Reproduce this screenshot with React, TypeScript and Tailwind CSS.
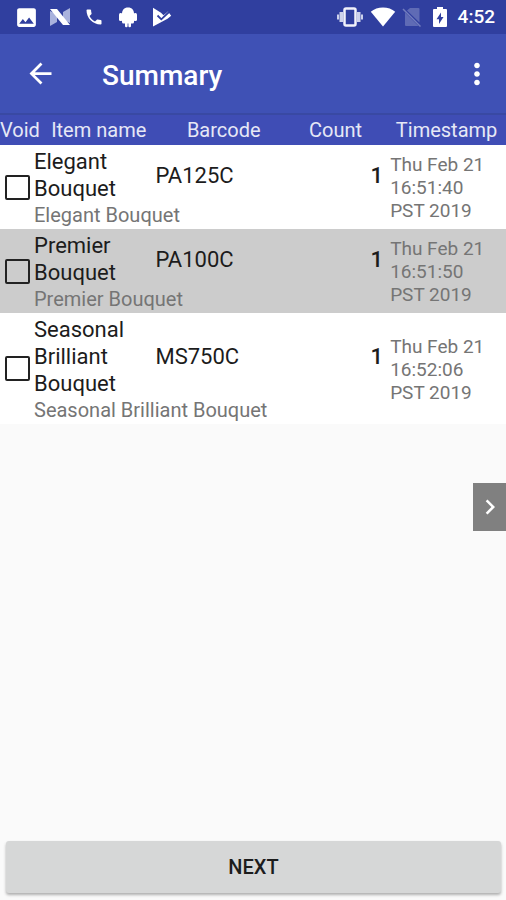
import React from "react";
import { MdArrowBack, MdMoreVert, MdImage, MdPhone, MdChevronRight } from "react-icons/md";

const items = [
  { name: "Elegant Bouquet", barcode: "PA125C", count: 1, timestamp: "Thu Feb 21 16:51:40 PST 2019" },
  { name: "Premier Bouquet", barcode: "PA100C", count: 1, timestamp: "Thu Feb 21 16:51:50 PST 2019" },
  { name: "Seasonal Brilliant Bouquet", barcode: "MS750C", count: 1, timestamp: "Thu Feb 21 16:52:06 PST 2019" },
];

const NougatIcon = () => (
  <svg viewBox="0 0 22 20" className="w-[22px] h-5">
    <path d="M1 4l7 3v8l-7 4z" fill="#a9b2dd" />
    <path d="M21 1v15l-7-3V5z" fill="#a9b2dd" />
    <path d="M1 2h7l13 16h-7z" fill="#fff" />
  </svg>
);

const AndroidIcon = () => (
  <svg viewBox="0 0 20 22" className="w-5 h-[22px]" fill="#fff">
    <path d="M4 8C4 4 6 1.500 10 1.500S16 4 16 8z" />
    <path d="M4 7h12v9a1.500 1.500 0 0 1-1.500 1.500H13V20a1.300 1.300 0 0 1-2.600 0v-2.500h-.8V20A1.300 1.300 0 0 1 7 20v-2.500H5.500A1.500 1.500 0 0 1 4 16z" />
    <rect x="1" y="7" width="3.500" height="8" rx="1.500" />
    <rect x="15.500" y="7" width="3.500" height="8" rx="1.500" />
  </svg>
);

const PlayCheckIcon = () => (
  <svg viewBox="0 0 20 20" className="w-5 h-5">
    <path d="M1 .8l8 5 2.500 2.500L16 4.500l3.200 4.300-3.700 3L1 19.500z" fill="#fff" />
    <path d="M5.500 8.500l3.800 3.800L17 5" fill="none" stroke="#303f9f" strokeWidth="1.800" />
  </svg>
);

const VibrateIcon = () => (
  <svg viewBox="0 0 28 20" className="w-7 h-5">
    <path d="M1 7.500h2v5H1zM25 7.500h2v5h-2zM3.500 5H7v10H3.500zM21 5h3.500v10H21z" fill="#cdd2ec" />
    <rect x="8.500" y="1.500" width="11" height="17" rx="1.500" fill="none" stroke="#f1f2fa" strokeWidth="2.500" />
    <path d="M11 3.500h6v13h-6z" fill="#303f9f" />
  </svg>
);

const WifiIcon = () => (
  <svg viewBox="0 0 26 20" className="w-[26px] h-5" fill="#fff">
    <path d="M13 19.500L.8 4.800C4 2 8.300.5 13 .5s9 1.500 12.200 4.300z" />
  </svg>
);

const NoSimIcon = () => (
  <svg viewBox="0 0 20 20" className="w-5 h-5">
    <path d="M8 1h8.500a1 1 0 0 1 1 1v13.500L5 3.500zM3 5.500l13.500 13.500H4a1 1 0 0 1-1-1z" fill="#5f6bb5" />
    <path d="M1 2l17.500 17.500" stroke="#727dbe" strokeWidth="1.500" />
  </svg>
);

const BatteryIcon = () => (
  <svg viewBox="0 0 24 20" className="w-6 h-5">
    <path d="M9 0h6v2h3a1 1 0 0 1 1 1v16a1 1 0 0 1-1 1H6a1 1 0 0 1-1-1V3a1 1 0 0 1 1-1h3z" fill="#fff" />
    <path d="M13 5.500v4.500h2.500L11 17v-4.800H8.500z" fill="#303f9f" />
  </svg>
);

const StatusBar = () => (
  <div className="flex items-center justify-between h-[34px] pl-[9px] pr-[11px] bg-[#303f9f] text-white">
    <div className="grid grid-cols-[repeat(5,34px)] items-center justify-items-center">
      <MdImage className="text-[25px]" />
      <NougatIcon />
      <MdPhone className="text-[20px]" />
      <AndroidIcon />
      <PlayCheckIcon />
    </div>
    <div className="flex items-center gap-[6px]">
      <VibrateIcon />
      <WifiIcon />
      <NoSimIcon />
      <BatteryIcon />
      <span className="text-[19px] font-medium">4:52</span>
    </div>
  </div>
);

const App = () => {
  return (
    <div className="relative flex flex-col min-h-screen bg-[#fafafa] font-[Roboto,sans-serif]">
      <StatusBar />

      {/* app bar */}
      <header className="flex items-center h-[79px] px-4 bg-[#3f51b5] text-white">
        <button aria-label="Back" className="w-12 flex justify-center">
          <MdArrowBack className="text-[33px]" />
        </button>
        <h1 className="flex-1 pl-[38px] pt-1 text-[28px] font-medium">Summary</h1>
        <button aria-label="More options" className="-mr-1">
          <MdMoreVert className="text-[34px]" />
        </button>
      </header>

      <table className="w-full table-fixed border-collapse">
        <colgroup>
          <col className="w-[34px]" />
          <col className="w-[24%]" />
          <col className="w-[27%]" />
          <col className="w-[18%]" />
          <col />
        </colgroup>
        <thead className="bg-[#3f4db5] text-[#e6e8f6] text-[20px] leading-[30px] whitespace-nowrap border-t-2 border-[#3949a3]">
          <tr>
            <th className="p-0 font-normal text-left">Void</th>
            <th className="p-0 pl-2 font-normal">Item name</th>
            <th className="p-0 font-normal">Barcode</th>
            <th className="p-0 pr-1 font-normal">Count</th>
            <th className="p-0 pl-1 font-normal">Timestamp</th>
          </tr>
        </thead>
        {items.map((item, i) => (
          <tbody key={item.barcode} className={i % 2 ? "bg-[#cccccc]" : "bg-white"}>
            <tr className="text-[22px] leading-[27px] text-[#1c1c1c]">
              <td rowSpan={2} className="p-0 pl-[5px] align-middle">
                <input
                  type="checkbox"
                  aria-label={`Void ${item.name}`}
                  className="block appearance-none w-[25px] h-[25px] border-[2px] border-[#222] rounded-[2px] checked:bg-[#3f51b5]"
                />
              </td>
              <td className="p-0 pt-[3px] pr-5">{item.name}</td>
              <td className="p-0 pt-[3px]">{item.barcode}</td>
              <td className="p-0 pt-[3px] text-right font-medium">{item.count}</td>
              <td rowSpan={2} className="p-0 pt-px pl-[7px] pr-4 text-[19px] leading-[23px] text-[#757575]">{item.timestamp}</td>
            </tr>
            <tr>
              <td colSpan={3} className="p-0 text-[20px] leading-[27px] text-[#757575]">{item.name}</td>
            </tr>
          </tbody>
        ))}
      </table>

      {/* side drawer handle */}
      <button aria-label="Open panel" className="absolute right-0 top-[483px] flex items-center justify-center w-[33px] h-12 bg-[#808080] text-white">
        <MdChevronRight className="text-[30px]" />
      </button>

      <div className="mt-auto pl-[6px] pr-[5px] pb-[7px]">
        <button className="w-full h-[52px] rounded-[3px] bg-[#d6d7d7] text-[20px] font-medium text-[#1c1c1c] shadow-[0_2px_3px_rgba(0,0,0,0.3)]">
          NEXT
        </button>
      </div>
    </div>
  );
};

export default App;
